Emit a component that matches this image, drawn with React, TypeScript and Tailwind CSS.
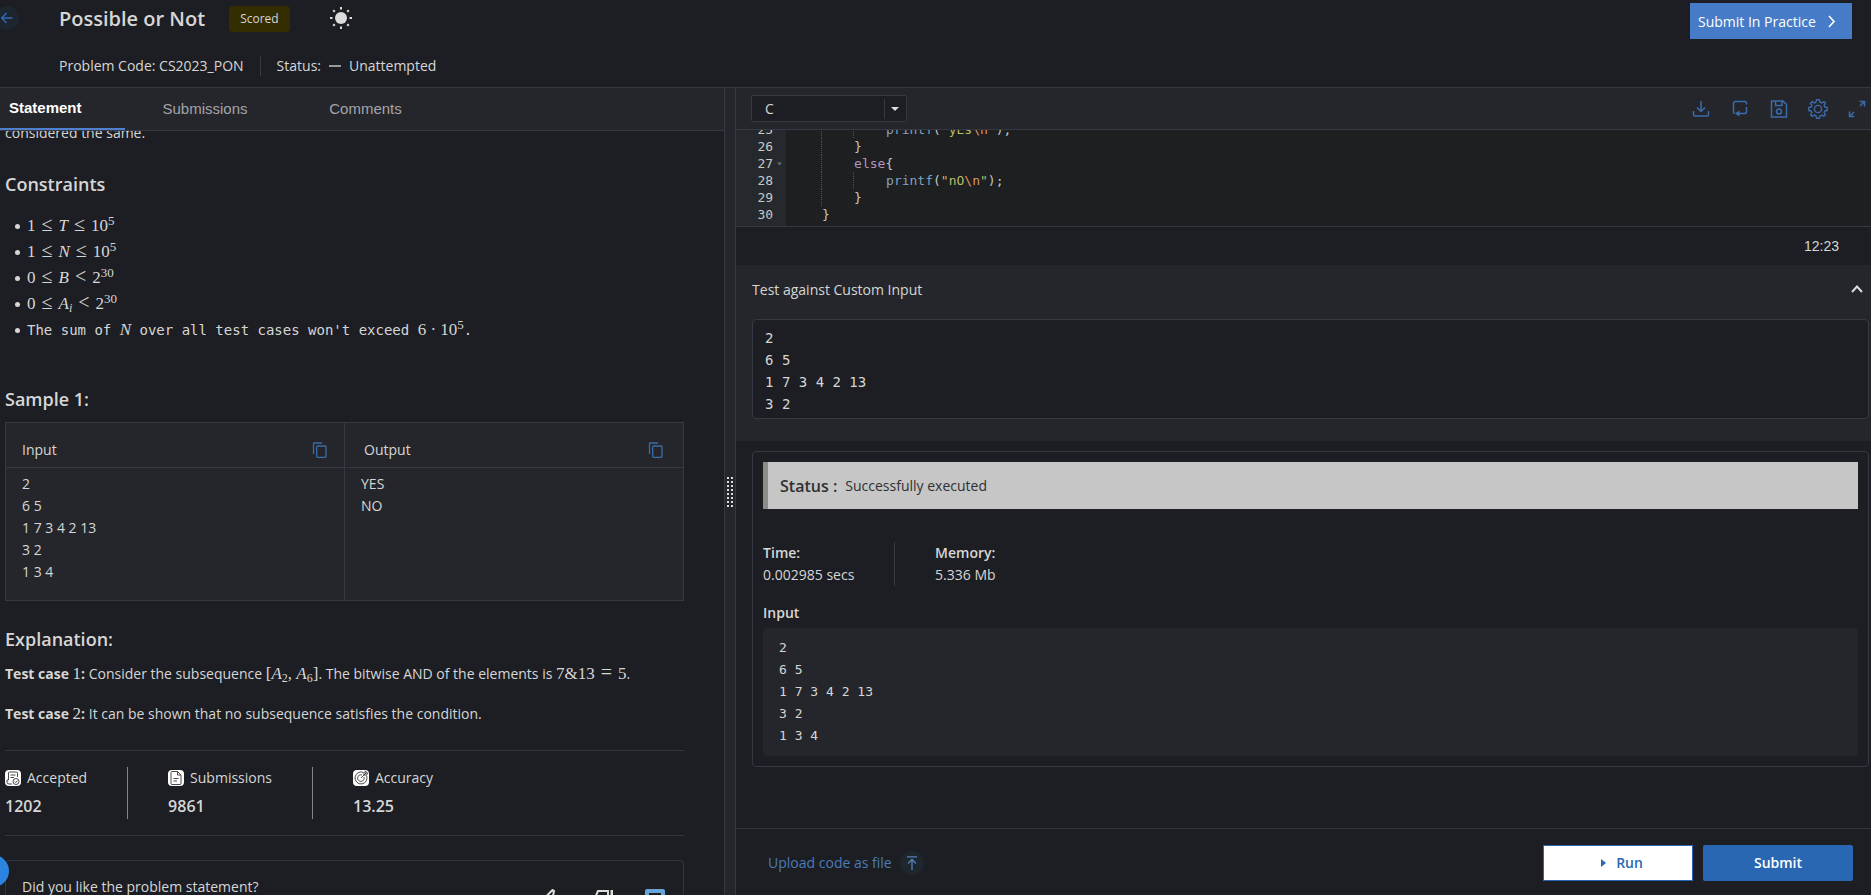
import type { ReactNode } from "react";

const sampleInput = "2\n6 5\n1 7 3 4 2 13\n3 2\n1 3 4";

function Tex({ children }: { children: ReactNode }) {
  return <span className="font-['Liberation_Serif',serif] text-[17px] font-normal leading-none">{children}</span>;
}

function Sup({ children }: { children: ReactNode }) {
  return <sup className="text-[13px]">{children}</sup>;
}

function Sub({ children }: { children: ReactNode }) {
  return <sub className="text-[12px]">{children}</sub>;
}

function Rel({ children }: { children: ReactNode }) {
  return <span className="mx-1.5 text-xl leading-3">{children}</span>;
}

function CopyIcon() {
  return (
    <svg className="h-4 w-4" viewBox="0 0 16 16" fill="none" stroke="#3a6cab" strokeWidth="1.3">
      <path d="M1.500 12V1.500Q1.500 1 2 1H10" />
      <rect x="4.700" y="4" width="9.300" height="11.300" rx="1" />
    </svg>
  );
}

function Header() {
  return (
    <header className="flex h-[87px] shrink-0 justify-between overflow-hidden">
      <div className="flex">
        <a href="#back" aria-label="Back" className="-ml-[5px] mt-1.5 flex h-6 w-6 items-center justify-center rounded-full bg-[#1d262f]">
          <svg className="h-3 w-3" viewBox="0 0 12 12" fill="none" stroke="#2f69b3" strokeWidth="1.5">
            <path d="M11.500 6H1M5.500 1L0.800 6L5.500 11" />
          </svg>
        </a>
        <div className="ml-10">
          <div className="flex h-[38px] items-center">
            <h1 className="text-xl font-semibold">Possible or Not</h1>
            <span className="ml-6 flex h-[26px] items-center rounded-sm bg-[#332d00] px-[11px] text-xs">Scored</span>
            <button aria-label="Toggle theme" className="ml-[39px]">
              <svg className="h-6 w-6" viewBox="0 0 24 24" fill="#dcdcdc" stroke="#dcdcdc" strokeWidth="2">
                <circle cx="12" cy="11" r="6" stroke="none" />
                <path d="M12 0V2.500M12 19.500V22M1 11H3.500M20.500 11H23M4.200 3.200L5.800 4.800M18.200 17.200L19.800 18.800M4.200 18.800L5.800 17.200M18.200 4.800L19.800 3.200" />
              </svg>
            </button>
          </div>
          <div className="mt-[18px] flex h-5 items-center text-sm">
            <span>Problem Code: CS2023_PON</span>
            <span className="ml-4 h-5 border-l border-[#383a46] pl-4">Status:</span>
            <span className="mx-2 h-0.5 w-3 bg-[#9a9a9a]"></span>
            <span>Unattempted</span>
          </div>
        </div>
      </div>
      <button className="mr-[19px] mt-[3px] flex h-9 w-[162px] items-center bg-[#457bc7] pl-2 pt-0.5 text-sm text-white">
        Submit In Practice
        <svg className="ml-2 h-3.5 w-3.5" viewBox="0 0 14 14" fill="none" stroke="white" strokeWidth="1.6">
          <path d="M5 1L10 6.500L5 12" />
        </svg>
      </button>
    </header>
  );
}

function Bullet({ children }: { children: ReactNode }) {
  return (
    <li className="flex h-[26px] items-center gap-[7px] pl-[10px]">
      <span className="h-[5px] w-[5px] rounded-full bg-[#d6d6d6]"></span>
      <span>{children}</span>
    </li>
  );
}

function Constraints() {
  return (
    <ul className="mt-[17px] leading-[26px]">
      <Bullet><Tex>1<Rel>≤</Rel><i>T</i><Rel>≤</Rel>10<Sup>5</Sup></Tex></Bullet>
      <Bullet><Tex>1<Rel>≤</Rel><i>N</i><Rel>≤</Rel>10<Sup>5</Sup></Tex></Bullet>
      <Bullet><Tex>0<Rel>≤</Rel><i>B</i><Rel>&lt;</Rel>2<Sup>30</Sup></Tex></Bullet>
      <Bullet><Tex>0<Rel>≤</Rel><i>A<Sub>i</Sub></i><Rel>&lt;</Rel>2<Sup>30</Sup></Tex></Bullet>
      <Bullet>
        <span className="font-['DejaVu_Sans_Mono',monospace]">
          The sum of <Tex><i>N</i></Tex> over all test cases won't exceed <Tex>6 · 10<Sup>5</Sup></Tex>.
        </span>
      </Bullet>
    </ul>
  );
}

function SampleTable() {
  return (
    <table className="mt-[11px] w-full table-fixed border-collapse bg-[#25262b] text-left text-sm">
      <thead>
        <tr className="h-[45px]">
          <th className="border border-[#363843] px-4 pt-2.5 font-normal">
            <div className="flex items-center justify-between">
              Input
              <button aria-label="Copy input"><CopyIcon /></button>
            </div>
          </th>
          <th className="border border-[#363843] px-[19px] pt-2.5 font-normal">
            <div className="flex items-center justify-between">
              Output
              <button aria-label="Copy output"><CopyIcon /></button>
            </div>
          </th>
        </tr>
      </thead>
      <tbody>
        <tr className="h-[133px] align-top leading-[22px]">
          <td className="whitespace-pre border border-[#363843] px-4 pt-[5px]">{sampleInput}</td>
          <td className="whitespace-pre border border-[#363843] px-4 pt-[5px]">{"YES\nNO"}</td>
        </tr>
      </tbody>
    </table>
  );
}

function Stat({ label, value, children }: { label: string; value: string; children: ReactNode }) {
  return (
    <div className="border-[#83858c] pr-10 not-last:mr-10 not-last:border-r">
      <div className="flex h-[22px] items-center gap-1.5 text-sm">
        <svg className="h-4 w-4 rounded-sm bg-white" viewBox="0 0 16 16" fill="none" stroke="#4a4a4a" strokeWidth="1">
          {children}
        </svg>
        {label}
      </div>
      <div className="mb-0.5 mt-1.5 text-base font-semibold leading-[22px]">{value}</div>
    </div>
  );
}

function Statement() {
  return (
    <section className="flex min-h-0 flex-1 flex-col overflow-hidden pl-[5px] pr-10 text-sm">
      <p className="-mt-2 shrink-0 leading-5">considered the same.</p>
      <h3 className="mt-[29px] text-lg font-semibold leading-6">Constraints</h3>
      <Constraints />
      <h3 className="mt-11 text-lg font-semibold leading-6">Sample 1:</h3>
      <SampleTable />
      <h3 className="mt-[26px] text-lg font-semibold leading-6">Explanation:</h3>
      <p className="mt-[13px] h-5 leading-5">
        <b>Test case <Tex>1</Tex>:</b> Consider the subsequence <Tex>[<i>A</i><Sub>2</Sub>, <i>A</i><Sub>6</Sub>]</Tex>. The bitwise AND of the elements is <Tex>7&amp;13<Rel>=</Rel>5</Tex>.
      </p>
      <p className="mt-5 h-5 leading-5">
        <b>Test case <Tex>2</Tex>:</b> It can be shown that no subsequence satisfies the condition.
      </p>
      <div className="mt-[26px] flex shrink-0 border-y border-[#33353e] py-4">
        <Stat label="Accepted" value="1202">
          <path d="M12.500 7V3Q12.500 2 11.500 2H4.500Q3.500 2 3.500 3V10M3.500 10H2V12Q2 14 4 14H7M5.500 5H10.500M5.500 7.500H9" />
          <circle cx="11" cy="11.500" r="3" />
          <path d="M9.700 11.500L10.700 12.500L12.400 10.600" />
        </Stat>
        <Stat label="Submissions" value="9861">
          <path d="M9.500 1.500H4Q3 1.500 3 2.500V13.500Q3 14.500 4 14.500H12Q13 14.500 13 13.500V5L9.500 1.500V5H13M5.500 8.500H10.500M5.500 11H9" />
        </Stat>
        <Stat label="Accuracy" value="13.25">
          <path d="M13.500 5.500A6 6 0 1 1 10.500 2.500M11 7A3.300 3.300 0 1 1 9 5M8 8L13 3M11 5V2.500L13 1V3H15L13.500 5Z" />
        </Stat>
      </div>
      <div className="mt-6 flex h-[62px] shrink-0 justify-between rounded-sm border border-[#33353e] pl-4 pr-[18px]">
        <span className="mt-4">Did you like the problem statement?</span>
        <div className="mt-[26px] flex h-6 gap-8">
          <button aria-label="Like">
            <svg className="h-5 w-5" viewBox="0 0 20 20" fill="none" stroke="#dcdcdc" strokeWidth="2">
              <path d="M5 18V7.500L11.500 1L13 2L12 7H19V10L16 18Z" />
              <path d="M1.500 9V19" />
            </svg>
          </button>
          <button aria-label="Dislike">
            <svg className="h-5 w-5" viewBox="0 0 20 20" fill="none" stroke="#dcdcdc" strokeWidth="2">
              <path d="M15 13V2H5L1 11V13H8V18L15 12" />
              <path d="M19 1V13" strokeWidth="3" />
            </svg>
          </button>
          <button aria-label="Comment">
            <svg className="h-5 w-5" viewBox="0 0 20 20" fill="#69a5dd">
              <path d="M2 0H18Q20 0 20 2V14Q20 16 18 16H4L0 20V2Q0 0 2 0Z" />
              <path d="M4 5H16M4 9H16" stroke="#1d1e23" strokeWidth="2" />
            </svg>
          </button>
        </div>
      </div>
    </section>
  );
}

function LeftPane() {
  return (
    <div className="flex w-[38.7%] shrink-0 flex-col">
      <nav className="flex h-[43px] shrink-0 border-b border-[#363843] bg-[#25262b] font-['Liberation_Sans',sans-serif] text-[15px] text-[#a3a4a8]">
        <a href="#statement" className="flex w-[125px] items-center border-b-2 border-[#4f80cf] pl-[9px] font-bold text-white">Statement</a>
        <a href="#submissions" className="flex w-[160px] items-center justify-center">Submissions</a>
        <a href="#comments" className="flex w-[161px] items-center justify-center">Comments</a>
      </nav>
      <Statement />
    </div>
  );
}

function Toolbar() {
  return (
    <div className="flex h-[42px] shrink-0 items-center justify-between border-b border-[#363843] bg-[#25262b] pl-[15px] pr-1">
      <div className="relative">
        <select aria-label="Language" className="h-[27px] w-[156px] appearance-none rounded-xs border border-[#363843] bg-[#1d1e23] pl-[13px] text-sm leading-none">
          <option>C</option>
        </select>
        <span className="pointer-events-none absolute right-0 top-1 flex h-5 w-[23px] items-center justify-center border-l border-[#363843] pr-0.5">
          <svg className="h-1 w-2" viewBox="0 0 8 4" fill="#dcdcdc"><path d="M0 0H8L4 4Z" /></svg>
        </span>
      </div>
      <div className="flex items-center gap-[19px]">
        <button aria-label="Download">
          <svg className="h-5 w-5" viewBox="0 0 20 20" fill="none" stroke="#3a6cab" strokeWidth="1.5">
            <path d="M10 2V12M6 8.500L10 12.500L14 8.500M2.500 12V15.500Q2.500 17 4 17H16Q17.500 17 17.500 15.500V12" />
          </svg>
        </button>
        <button aria-label="Reset">
          <svg className="h-5 w-5" viewBox="0 0 20 20" fill="none" stroke="#3a6cab" strokeWidth="1.5">
            <path d="M4.500 14.500Q3.500 14 3.500 12.500V4.500Q3.500 2.500 5.500 2.500H15Q16.500 2.500 16.500 4.500V5.500M16.500 8V12.500Q16.500 14.500 14.500 14.500H6" />
            <path d="M9.500 11.500V17.500L5 14.500Z" fill="#3a6cab" stroke="none" />
          </svg>
        </button>
        <button aria-label="Save">
          <svg className="h-5 w-5" viewBox="0 0 20 20" fill="none" stroke="#3a6cab" strokeWidth="1.5">
            <path d="M2.500 2H14L17.500 5.500V18H2.500ZM6.500 2V6.500H13V2" />
            <circle cx="10" cy="12.500" r="2.500" />
          </svg>
        </button>
        <button aria-label="Settings">
          <svg className="h-5 w-5" viewBox="0 0 20 20" fill="none" stroke="#3a6cab" strokeWidth="1.400" strokeLinejoin="round">
            <path d="M8.500 0.800H11.500L12 3.200L13.800 4L15.800 2.600L17.500 4.300L16.100 6.200L16.800 8L19.200 8.500V11.500L16.800 12L16.100 13.800L17.500 15.700L15.700 17.400L13.800 16L12 16.800L11.500 19.200H8.500L8 16.800L6.200 16L4.300 17.400L2.500 15.700L3.900 13.800L3.200 12L0.800 11.500V8.500L3.200 8L3.900 6.200L2.500 4.300L4.300 2.600L6.200 4L8 3.200Z" />
            <circle cx="10" cy="10" r="3.600" />
          </svg>
        </button>
        <button aria-label="Full screen">
          <svg className="h-5 w-5" viewBox="0 0 20 20" fill="none" stroke="#3a6cab" strokeWidth="1.500">
            <path d="M13 7L17 3M12.500 2.500H17.500V7.500M7 13L3 17M2.500 12.500V17.500H7.500" />
          </svg>
        </button>
      </div>
    </div>
  );
}

function CodeLine({ no, guides, fold, children }: { no: number; guides: number; fold?: boolean; children: ReactNode }) {
  return (
    <div className="flex h-[17px]">
      <div className="flex w-[50px] items-center bg-[#25282c]">
        <span className="w-[37px] text-right">{no}</span>
        {fold && <svg className="ml-1 h-1 w-[5px]" viewBox="0 0 5 3" fill="#6b6e70"><path d="M0 0H5L2.500 3Z" /></svg>}
      </div>
      <div className="flex whitespace-pre pl-1">
        <span className="w-8"></span>
        {guides > 0 && <span className="-ml-px w-[33px] border-l border-dotted border-[#505356]"></span>}
        {guides > 1 && <span className="-ml-px w-[33px] border-l border-dotted border-[#505356]"></span>}
        <span>{children}</span>
      </div>
    </div>
  );
}

function Editor() {
  return (
    <div className="h-[97px] shrink-0 overflow-hidden border-b border-[#363843] bg-[#1d1f21] font-['DejaVu_Sans_Mono',monospace] text-[13px] leading-[17px] text-[#c5c8c6]">
      <div className="-mt-[9px]">
        <CodeLine no={25} guides={2}>
          <span className="text-[#81a2be]">printf</span>(<span className="text-[#b5bd68]">"yEs<span className="text-[#de935f]">\n</span>"</span>);
        </CodeLine>
        <CodeLine no={26} guides={1}>{"}"}</CodeLine>
        <CodeLine no={27} guides={1} fold><span className="text-[#b294bb]">else</span>{"{"}</CodeLine>
        <CodeLine no={28} guides={2}>
          <span className="text-[#81a2be]">printf</span>(<span className="text-[#b5bd68]">"nO<span className="text-[#de935f]">\n</span>"</span>);
        </CodeLine>
        <CodeLine no={29} guides={1}>{"}"}</CodeLine>
        <CodeLine no={30} guides={0}>{"}"}</CodeLine>
        <div className="h-1 w-[50px] bg-[#25282c]"></div>
      </div>
    </div>
  );
}

function CustomInput() {
  return (
    <div className="h-[176px] shrink-0 bg-[#25262b] pl-4 pr-0.5">
      <div className="flex h-[54px] items-center justify-between pb-1 pr-1.5">
        <label htmlFor="custom-input" className="text-sm">Test against Custom Input</label>
        <button aria-label="Collapse">
          <svg className="h-3 w-3" viewBox="0 0 12 12" fill="none" stroke="#dcdcdc" strokeWidth="2">
            <path d="M1 8L6 2.500L11 8" />
          </svg>
        </button>
      </div>
      <textarea
        id="custom-input"
        defaultValue={sampleInput}
        className="block h-[100px] w-full resize-none overflow-hidden rounded-sm border border-[#363843] bg-[#1d1e23] px-3 py-[7px] font-['DejaVu_Sans_Mono',monospace] text-sm leading-[22px]"
      />
    </div>
  );
}

function Result() {
  return (
    <div className="ml-4 mr-0.5 mt-[10px] shrink-0 rounded-sm border border-[#363843] p-[10px] text-sm">
      <div className="flex h-[47px] items-center border-l-[5px] border-[#8b8f88] bg-[#c6c6c6] pl-3 text-[#2f3033]">
        <b className="mr-2 text-base font-semibold">Status :</b>
        <span>Successfully executed</span>
      </div>
      <div className="mt-[33px] flex leading-[22px]">
        <div className="w-[132px] border-r border-[#363843]">
          <div className="font-semibold">Time:</div>
          <div>0.002985 secs</div>
        </div>
        <div className="pl-10">
          <div className="font-semibold">Memory:</div>
          <div>5.336 Mb</div>
        </div>
      </div>
      <div className="mt-4 font-semibold leading-[22px]">Input</div>
      <pre className="mt-1 rounded-sm bg-[#25262b] px-4 py-[9px] font-['DejaVu_Sans_Mono',monospace] text-[13px] leading-[22px]">{sampleInput}</pre>
    </div>
  );
}

function Footer() {
  return (
    <footer className="mt-auto flex h-[67px] shrink-0 items-center justify-between border-t border-[#33353e] pl-8 pr-[18px] pt-0.5">
      <button className="flex items-center gap-2 text-sm text-[#4a7ab8]">
        Upload code as file
        <span className="flex h-6 w-6 items-center justify-center rounded-full bg-[#1f272e]">
          <svg className="h-[14px] w-3" viewBox="0 0 12 14" fill="none" stroke="#5580b8" strokeWidth="1.300">
            <path d="M1 0.800H11M6 14V3.500M2 7.500L6 3.500L10 7.500" />
          </svg>
        </span>
      </button>
      <div className="flex gap-2.5 text-sm font-semibold">
        <button className="flex h-9 w-[150px] items-center justify-center gap-2.5 border border-[#2a67b2] bg-white pl-2 text-[#2a67b2]">
          <svg className="h-2 w-[5px]" viewBox="0 0 5 8" fill="currentColor"><path d="M0 0L5 4L0 8Z" /></svg>
          Run
        </button>
        <button className="h-9 w-[150px] rounded-xs bg-[#2a67b2] text-white">Submit</button>
      </div>
    </footer>
  );
}

export default function App() {
  return (
    <div className="relative flex h-screen flex-col overflow-hidden bg-[#1d1e23] font-['Open_Sans','Noto_Sans',sans-serif] text-[#d6d6d6]">
      <Header />
      <main className="flex min-h-0 flex-1 border-t border-[#363843]">
        <LeftPane />
        <div className="flex w-3 shrink-0 items-center justify-center border-x border-[#363843] bg-[#25262b]">
          <svg className="h-[30px] w-1.5" viewBox="0 0 6 30" stroke="#dcdcdc" strokeWidth="2" strokeDasharray="2 2">
            <path d="M1 0V30M5 0V30" />
          </svg>
        </div>
        <div className="flex min-w-0 flex-1 flex-col">
          <Toolbar />
          <Editor />
          <div className="flex h-[38px] shrink-0 items-center justify-end pr-8 font-['Liberation_Sans',sans-serif] text-sm">12:23</div>
          <CustomInput />
          <Result />
          <Footer />
        </div>
      </main>
      <button aria-label="Help" className="absolute -left-[23px] bottom-2 h-8 w-8 rounded-full bg-[#2b84df]"></button>
    </div>
  );
}
